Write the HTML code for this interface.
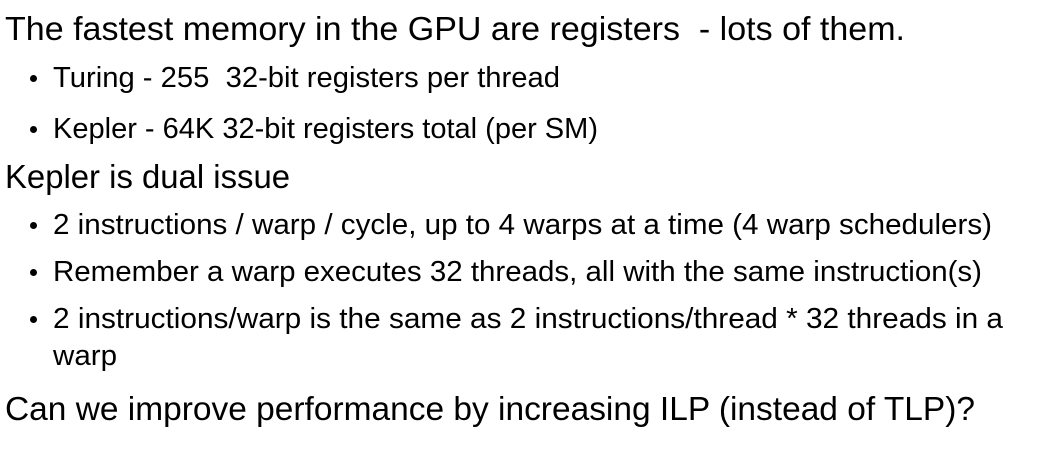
<!DOCTYPE html>
<html><head><meta charset="utf-8"><style>
html,body{margin:0;padding:0;background:#fff;width:1046px;height:449px;overflow:hidden}
.l{position:absolute;white-space:pre;font-family:"Liberation Sans",sans-serif;color:#000;line-height:1;transform-origin:0 0}
.b{position:absolute;width:7px;height:7px;border-radius:50%;background:#000}
</style></head><body>
<div class="l" style="left:5px;top:12px;font-size:33px" id="a0">The fastest memory in the GPU are registers  - lots of them.</div>
<div class="b" style="left:30px;top:75px"></div>
<div class="l" style="left:53px;top:64px;font-size:29px" id="a1">Turing - 255  32-bit registers per thread</div>
<div class="b" style="left:30px;top:126px"></div>
<div class="l" style="left:53px;top:115px;font-size:29px" id="a2">Kepler - 64K 32-bit registers total (per SM)</div>
<div class="l" style="left:5px;top:160px;font-size:33px" id="a3">Kepler is dual issue</div>
<div class="b" style="left:30px;top:222px"></div>
<div class="l" style="left:53px;top:211px;font-size:29px" id="a4">2 instructions / warp / cycle, up to 4 warps at a time (4 warp schedulers)</div>
<div class="b" style="left:30px;top:269px"></div>
<div class="l" style="left:53px;top:258px;font-size:29px" id="a5">Remember a warp executes 32 threads, all with the same instruction(s)</div>
<div class="b" style="left:30px;top:316px"></div>
<div class="l" style="left:53px;top:305px;font-size:29px" id="a6">2 instructions/warp is the same as 2 instructions/thread * 32 threads in a</div>
<div class="l" style="left:53px;top:342px;font-size:29px" id="a7">warp</div>
<div class="l" style="left:5px;top:392px;font-size:33px" id="a8">Can we improve performance by increasing ILP (instead of TLP)?</div>
<script>
var w=[900,507,545,285,939,929,950,64,970];
for(var i=0;i<w.length;i++){var e=document.getElementById('a'+i);var r=e.getBoundingClientRect().width;e.style.transform='scaleX('+(w[i]/r)+')';}
</script>
</body></html>
